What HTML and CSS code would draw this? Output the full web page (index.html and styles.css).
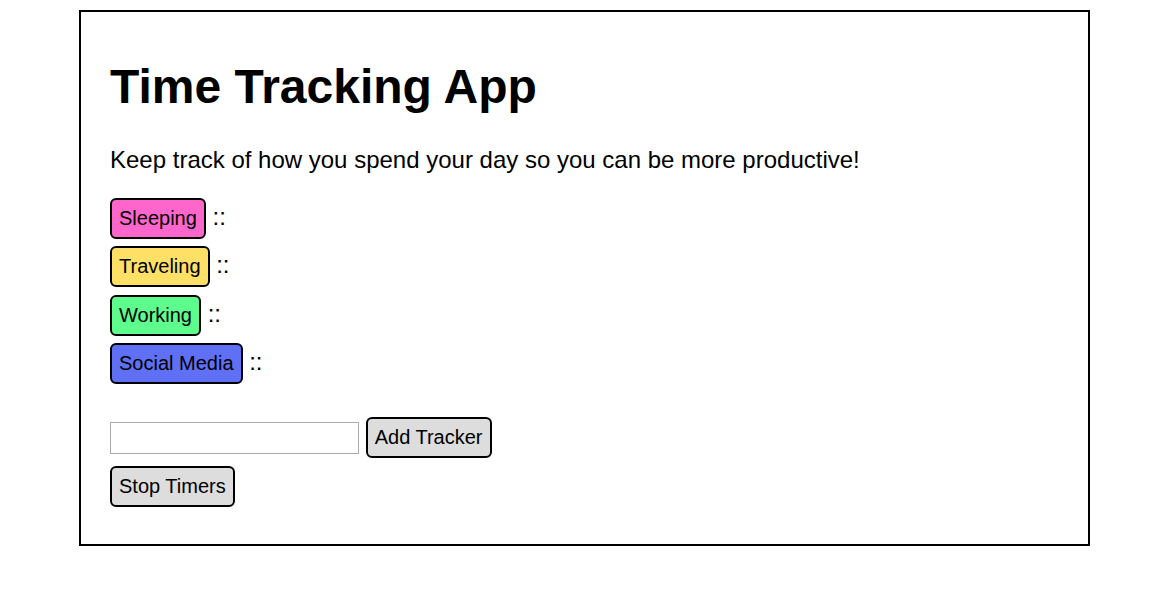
FILE: index.html
```html
<!DOCTYPE html>
<html lang="en">
<head>
<meta charset="utf-8">
<title>Time Tracking App</title>
<link rel="stylesheet" href="styles.css">
</head>
<body>
<main class="app">
  <h1 class="title">Time Tracking App</h1>
  <p class="intro">Keep track of how you spend your day so you can be more productive!</p>
  <div class="trackers">
    <div class="tracker"><button class="btn pink">Sleeping</button> ::</div>
    <div class="tracker"><button class="btn yellow">Traveling</button> ::</div>
    <div class="tracker"><button class="btn green">Working</button> ::</div>
    <div class="tracker"><button class="btn blue">Social Media</button> ::</div>
  </div>
  <div class="controls">
    <div class="add-row"><input class="name-input" type="text"> <button class="btn grey">Add Tracker</button></div>
    <div class="stop-row"><button class="btn grey">Stop Timers</button></div>
  </div>
</main>
</body>
</html>
```
FILE: styles.css
```css
html, body {
  margin: 0;
  padding: 0;
  background: #fff;
}

body {
  font-family: "Liberation Sans", Arial, sans-serif;
  font-size: 24px;
  color: #000;
}

.app {
  box-sizing: border-box;
  width: 1011px;
  margin: 10px 0 0 79px;
  border: 2px solid #000;
  padding: 15px 29px 37px 29px;
}

.title {
  font-size: 48px;
  font-weight: bold;
  margin: 32px 0 32px 0;
  line-height: normal;
}

.intro {
  margin: 0 0 24px 0;
}

.trackers {
  display: flex;
  flex-direction: column;
  gap: 7.3px;
}

.tracker {
  line-height: normal;
}

.btn {
  font-family: "Liberation Sans", Arial, sans-serif;
  font-size: 20px;
  line-height: normal;
  color: #000;
  border: 2px solid #000;
  border-radius: 6px;
  padding: 7px;
  margin: 0;
  cursor: pointer;
}

.pink { background: #ff66cc; }
.yellow { background: #ffe066; }
.green { background: #5efc8d; }
.blue { background: #5f6ff6; }
.grey { background: #dddddd; }

.controls {
  margin-top: 33.4px;
  display: flex;
  flex-direction: column;
  gap: 8px;
}

.name-input {
  box-sizing: border-box;
  width: 249px;
  height: 32px;
  font-family: "Liberation Sans", Arial, sans-serif;
  font-size: 24px;
  border: 1px solid #aaaaaa;
  padding: 1px 2px;
  margin: 0;
  background: #fff;
  vertical-align: -2px;
}
```
